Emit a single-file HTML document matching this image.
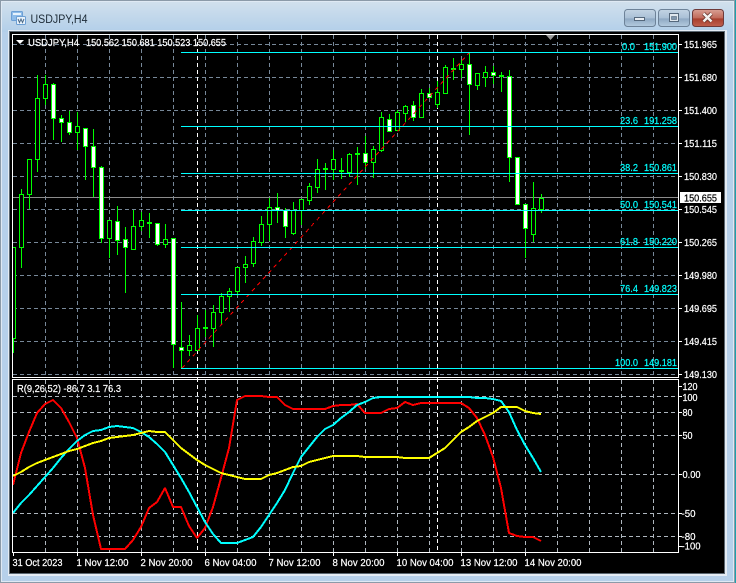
<!DOCTYPE html>
<html><head><meta charset="utf-8"><title>USDJPY,H4</title>
<style>
html,body{margin:0;padding:0;background:#1aa3ad;width:736px;height:583px;overflow:hidden}
svg{display:block}
text{font-family:"Liberation Sans",sans-serif;font-size:10.5px;fill:#fff;stroke:#fff;stroke-width:.22px}
.c text{fill:#00ffff;stroke:#00ffff}
</style></head><body>
<svg width="736" height="583" viewBox="0 0 736 583" xmlns="http://www.w3.org/2000/svg">
<defs>
<linearGradient id="tb" x1="0" y1="0" x2="0" y2="1"><stop offset="0" stop-color="#d3e1ed"/><stop offset="1" stop-color="#b3cfe9"/></linearGradient>
<linearGradient id="btn" x1="0" y1="0" x2="0" y2="1"><stop offset="0" stop-color="#c3d4e4"/><stop offset=".5" stop-color="#a9c0d6"/><stop offset=".55" stop-color="#8fa9c3"/><stop offset="1" stop-color="#b4cbe0"/></linearGradient>
<linearGradient id="cls" x1="0" y1="0" x2="0" y2="1"><stop offset="0" stop-color="#d9a095"/><stop offset=".5" stop-color="#c06a5a"/><stop offset=".55" stop-color="#a83f2e"/><stop offset="1" stop-color="#c0604e"/></linearGradient>
</defs>
<!-- window frame -->
<rect x="0" y="0" width="735" height="582" fill="#b6d0ea"/>
<rect x="0" y="0" width="735" height="32" fill="url(#tb)"/>
<rect x="0.5" y="0.5" width="734" height="582" fill="none" stroke="#8b9aa8"/>
<rect x="1.5" y="1.5" width="732" height="580" fill="none" stroke="#dfe9f3"/>
<rect x="8" y="30" width="719" height="546" fill="#e4ecf4"/>
<rect x="9" y="31" width="716" height="543" fill="#5a6670"/>
<rect x="10" y="32" width="714" height="541" fill="#000"/>
<!-- title -->
<g>
<rect x="11.5" y="11.5" width="11" height="9" rx="1" fill="#8fbdea" stroke="#6c9fd4"/>
<rect x="13" y="13" width="8" height="2" fill="#e8f3fc"/>
<rect x="16.5" y="16.5" width="9" height="8" rx="1" fill="#e9f3fc" stroke="#6c9fd4"/>
<path d="M18 19l1.500 3.500l1.500-3.500l1.500 3.500l1.500-3.500" fill="none" stroke="#4c6a88" stroke-width="1"/>
</g>
<text x="30.500" y="23" textLength="57" lengthAdjust="spacingAndGlyphs" style="font-size:11.5px;fill:#1c2a36;stroke:none">USDJPY,H4</text>
<!-- buttons -->
<rect x="624.500" y="9.500" width="31" height="17" rx="3" fill="url(#btn)" stroke="#6d8298"/>
<rect x="634.500" y="17.500" width="10" height="3" fill="#e9eef3" stroke="#55687c"/>
<rect x="658.500" y="9.500" width="31" height="17" rx="3" fill="url(#btn)" stroke="#6d8298"/>
<rect x="669.500" y="13.500" width="9" height="8" fill="#dfe7ee" stroke="#55687c"/>
<rect x="671.500" y="16.500" width="5" height="3" fill="#7f96ad" stroke="#55687c" stroke-width=".6"/>
<rect x="692.500" y="9.500" width="31" height="17" rx="3" fill="url(#cls)" stroke="#6e3a3a"/>
<path d="M703.500 13.500l8 8M711.500 13.500l-8 8" stroke="#5c2a22" stroke-width="4"/>
<path d="M703.500 13.500l8 8M711.500 13.500l-8 8" stroke="#f4f1ee" stroke-width="2.600"/>
<!-- main grid -->
<g fill="none" stroke="#778899" stroke-dasharray="4 3">
<path d="M13 44.500H678M13 77.500H678M13 110.500H678M13 143.500H678M13 176.500H678M13 209.500H678M13 242.500H678M13 275.500H678M13 308.500H678M13 341.500H678M13 374.500H678"/>
<path d="M45.500 35V377M77.500 35V377M109.500 35V377M141.500 35V377M173.500 35V377M205.500 35V377M237.500 35V377M269.500 35V377M301.500 35V377M333.500 35V377M365.500 35V377M397.500 35V377M429.500 35V377M461.500 35V377M493.500 35V377M525.500 35V377M557.500 35V377M589.500 35V377M621.500 35V377M653.500 35V377"/>
</g>
<!-- sub grid -->
<g fill="none" stroke="#aeb6be" stroke-dasharray="4 3">
<path d="M13 396.500H678M13 412.500H678M13 435.500H678M13 474.500H678M13 513.500H678M13 536.500H678"/>
<path d="M45.500 380V552M77.500 380V552M109.500 380V552M141.500 380V552M173.500 380V552M205.500 380V552M237.500 380V552M269.500 380V552M301.500 380V552M333.500 380V552M365.500 380V552M397.500 380V552M429.500 380V552M461.500 380V552M493.500 380V552M525.500 380V552M557.500 380V552M589.500 380V552M621.500 380V552M653.500 380V552"/>
</g>
<!-- period separators -->
<path d="M197.500 35V552M437.500 35V552" stroke="#fff" stroke-dasharray="4 3" fill="none"/>
<!-- bid line -->
<path d="M13 197.500H678" stroke="#8c8c8c" fill="none"/>
<!-- wicks -->
<path fill="none" stroke="#00ff00" d="M13.500 338V353M21.500 189V268M29.500 159V209M37.500 75V172M45.500 75V105M53.500 83V140M61.500 115V142M69.500 111V135M77.500 112V150M85.500 128V180M93.500 129V197M101.500 166V243M109.500 220V258M117.500 206V255M125.500 227V293M133.500 210V249M141.500 212V231M149.500 213V238M157.500 223V246M165.500 224V248M173.500 238V368M181.500 302V368M189.500 335V356M197.500 315V350M205.500 310V337M213.500 305V347M221.500 293V325M229.500 288V312M237.500 267V296M245.500 256V283M253.500 237V267M261.500 216V246M269.500 198V241M277.500 193V223M285.500 208V238M293.500 202V235M301.500 199V225M309.500 183V205M317.500 159V193M325.500 163V190M333.500 150V180M341.500 158V179M349.500 153V177M357.500 147V185M365.500 136V169M373.500 146V178M381.500 112V152M389.500 114V131M397.500 110V130M405.500 105V122M413.500 101V121M421.500 89V117M429.500 88V97M437.500 81V108M445.500 65V94M453.500 58V80M461.500 60V78M469.500 53V135M477.500 73V90M485.500 66V87M493.500 66V84M501.500 72V92M509.500 70V182M517.500 157V205M525.500 204V258M533.500 182V242M541.500 194V213"/>
<!-- bull bodies -->
<path fill="#000" stroke="#00ff00" d="M13 247.500h2.500v91H13M19.500 194.500h4v53h-4zM27.500 159.500h4v35h-4zM35.500 98.500h4v61h-4zM43.500 84.500h4v14h-4zM75.500 126.500h4v6h-4zM107.500 220.500h4v18h-4zM131.500 226.500h4v23h-4zM139.500 220.500h4v6h-4zM147.500 222.500h4v1h-4zM163.500 239.500h4v5h-4zM187.500 345.500h4v5h-4zM195.500 328.500h4v22h-4zM203.500 327.500h4v1h-4zM211.500 312.500h4v16h-4zM219.500 296.500h4v16h-4zM227.500 291.500h4v5h-4zM235.500 267.500h4v24h-4zM243.500 264.500h4v3h-4zM251.500 241.500h4v22h-4zM259.500 224.500h4v18h-4zM267.500 207.500h4v17h-4zM291.500 210.500h4v23h-4zM299.500 199.500h4v11h-4zM307.500 186.500h4v14h-4zM315.500 169.500h4v18h-4zM323.500 168.500h4v1h-4zM331.500 159.500h4v10h-4zM339.500 170.500h4v1h-4zM347.500 154.500h4v18h-4zM355.500 153.500h4v1h-4zM371.500 149.500h4v13h-4zM379.500 117.500h4v33h-4zM395.500 112.500h4v18h-4zM403.500 106.500h4v7h-4zM419.500 93.500h4v24h-4zM435.500 92.500h4v12h-4zM443.500 67.500h4v26h-4zM451.500 68.500h4v1h-4zM459.500 64.500h4v5h-4zM475.500 73.500h4v12h-4zM483.500 72.500h4v5h-4zM499.500 75.500h4v1h-4zM531.500 208.500h4v26h-4zM539.500 198.500h4v11h-4z"/>
<!-- bear bodies -->
<path fill="#fff" stroke="#00ff00" d="M51.500 84.500h4v34h-4zM59.500 118.500h4v4h-4zM67.500 122.500h4v10h-4zM83.500 128.500h4v18h-4zM91.500 146.500h4v21h-4zM99.500 167.500h4v71h-4zM115.500 221.500h4v19h-4zM123.500 239.500h4v8h-4zM155.500 223.500h4v21h-4zM171.500 238.500h4v106h-4zM179.500 347.500h4v3h-4zM275.500 207.500h4v3h-4zM283.500 210.500h4v16h-4zM363.500 153.500h4v9h-4zM387.500 119.500h4v12h-4zM411.500 105.500h4v12h-4zM427.500 93.500h4v4h-4zM467.500 64.500h4v20h-4zM491.500 72.500h4v3h-4zM507.500 76.500h4v81h-4zM515.500 157.500h4v47h-4zM523.500 204.500h4v24h-4z"/>
<!-- fib trend -->
<path d="M182 368L469 53" stroke="#ff0000" stroke-dasharray="4 4" fill="none" shape-rendering="crispEdges"/>
<!-- fib levels -->
<path d="M181 52.500H678M181 126.500H678M181 173.500H678M181 210.500H678M181 247.500H678M181 294.500H678M181 368.500H678" stroke="#00ffff" fill="none"/>
<g class="c">
<text x="622" y="50" textLength="13" lengthAdjust="spacingAndGlyphs">0.0</text><text x="644" y="50" textLength="33" lengthAdjust="spacingAndGlyphs">151.900</text>
<text x="620" y="124" textLength="18" lengthAdjust="spacingAndGlyphs">23.6</text><text x="644" y="124" textLength="33" lengthAdjust="spacingAndGlyphs">191.258</text>
<text x="620" y="171" textLength="18" lengthAdjust="spacingAndGlyphs">38.2</text><text x="644" y="171" textLength="33" lengthAdjust="spacingAndGlyphs">150.861</text>
<text x="620" y="208" textLength="18" lengthAdjust="spacingAndGlyphs">50.0</text><text x="644" y="208" textLength="33" lengthAdjust="spacingAndGlyphs">150.541</text>
<text x="620" y="245" textLength="18" lengthAdjust="spacingAndGlyphs">61.8</text><text x="644" y="245" textLength="33" lengthAdjust="spacingAndGlyphs">150.220</text>
<text x="620" y="292" textLength="18" lengthAdjust="spacingAndGlyphs">76.4</text><text x="644" y="292" textLength="33" lengthAdjust="spacingAndGlyphs">149.823</text>
<text x="615" y="366" textLength="23" lengthAdjust="spacingAndGlyphs">100.0</text><text x="644" y="366" textLength="33" lengthAdjust="spacingAndGlyphs">149.181</text>
</g>
<!-- indicator lines -->
<g fill="none" stroke-width="2" stroke-linejoin="bevel" shape-rendering="crispEdges">
<polyline stroke="#ff0000" points="13,485 21,453 29,432 37,413 45,404 53,400 61,408 69,422 77,438 85,468 93,515 101,549 109,549 117,549 125,549 133,540 141,527 149,508 157,502 165,488 173,507 181,507 189,526 197,538 205,528 213,507 221,478 229,448 237,400 245,396 253,396 261,396 269,397 277,397 285,405 293,409 301,409 309,409 317,409 325,409 333,406 341,405 349,405 357,404 365,413 373,413 381,413 389,409 397,408 405,402 413,405 421,403 429,403 437,403 445,403 453,403 461,403 469,408 477,418 485,435 493,457 501,488 509,533 517,536 525,537 533,537 541,541"/>
<polyline stroke="#00ffff" points="13,513 21,503 29,495 37,486 45,477 53,468 61,458 69,449 77,441 85,435 93,431 101,430 109,427 117,426 125,427 133,428 141,432 149,437 157,444 165,452 173,465 181,478 189,492 197,507 205,522 213,534 221,543 229,543 237,543 245,540 253,537 261,527 269,515 277,503 285,490 293,473 301,457 309,447 317,437 325,429 333,425 341,418 349,412 357,405 365,402 373,398 381,397 389,397 397,397 405,397 413,397 421,397 429,397 437,397 445,397 453,397 461,397 469,397 477,398 485,398 493,399 501,401 509,412 517,430 525,445 533,458 541,472"/>
<polyline stroke="#ffff00" points="13,476 21,472 29,467 37,463 45,460 53,457 61,454 69,451 77,449 85,446 93,443 101,441 109,438 117,437 125,436 133,435 141,433 149,431 157,432 165,432 173,440 181,448 189,454 197,460 205,465 213,469 221,473 229,475 237,477 245,479 253,479 261,479 269,475 277,473 285,470 293,467 301,466 309,462 317,460 325,458 333,456 341,456 349,456 357,456 365,457 373,457 381,457 389,457 397,457 405,458 413,458 421,458 429,458 437,453 445,448 453,440 461,432 469,427 477,421 485,417 493,413 501,407 509,407 517,407 525,411 533,413 541,414"/>
</g>
<!-- chart borders -->
<rect x="12.500" y="34.500" width="666" height="343" fill="none" stroke="#fff"/>
<rect x="12.500" y="379.500" width="666" height="173" fill="none" stroke="#fff"/>
<!-- shift marker -->
<polygon points="546,35 555,35 550.500,40" fill="#9a9a9a"/>
<!-- ticks -->
<path fill="none" stroke="#fff" d="M679 44.500h3M679 77.500h3M679 110.500h3M679 143.500h3M679 176.500h3M679 209.500h3M679 242.500h3M679 275.500h3M679 308.500h3M679 341.500h3M679 374.500h3M679 386.500h3M679 396.500h3M679 412.500h3M679 435.500h3M679 474.500h3M679 513.500h3M679 536.500h3M679 546.500h3M13.500 553v3M77.500 553v3M141.500 553v3M205.500 553v3M269.500 553v3M333.500 553v3M397.500 553v3M461.500 553v3M525.500 553v3"/>
<!-- header -->
<polygon points="16,40 24,40 20,44" fill="#fff"/>
<text x="28" y="46" textLength="51" lengthAdjust="spacingAndGlyphs">USDJPY,H4</text>
<text x="86" y="46" textLength="140" lengthAdjust="spacingAndGlyphs">150.562 150.681 150.523 150.655</text>
<text x="17" y="392" textLength="104" lengthAdjust="spacingAndGlyphs">R(9,26,52) -86.7 3.1 76.3</text>
<!-- price axis -->
<g>
<text x="684" y="48" textLength="33" lengthAdjust="spacingAndGlyphs">151.965</text>
<text x="684" y="81" textLength="33" lengthAdjust="spacingAndGlyphs">151.680</text>
<text x="684" y="114" textLength="33" lengthAdjust="spacingAndGlyphs">151.400</text>
<text x="684" y="147" textLength="33" lengthAdjust="spacingAndGlyphs">151.115</text>
<text x="684" y="180" textLength="33" lengthAdjust="spacingAndGlyphs">150.830</text>
<text x="684" y="213" textLength="33" lengthAdjust="spacingAndGlyphs">150.545</text>
<text x="684" y="246" textLength="33" lengthAdjust="spacingAndGlyphs">150.265</text>
<text x="684" y="279" textLength="33" lengthAdjust="spacingAndGlyphs">149.980</text>
<text x="684" y="312" textLength="33" lengthAdjust="spacingAndGlyphs">149.695</text>
<text x="684" y="345" textLength="33" lengthAdjust="spacingAndGlyphs">149.415</text>
<text x="684" y="378" textLength="33" lengthAdjust="spacingAndGlyphs">149.130</text>
</g>
<rect x="680" y="192" width="41" height="11" fill="#fff"/>
<text x="684" y="201.500" textLength="33" lengthAdjust="spacingAndGlyphs" style="fill:#000;stroke:#000">150.655</text>
<!-- indicator axis -->
<text x="682.500" y="390" textLength="15" lengthAdjust="spacingAndGlyphs">120</text>
<text x="682.500" y="401" textLength="15" lengthAdjust="spacingAndGlyphs">100</text>
<text x="682.500" y="416" textLength="10" lengthAdjust="spacingAndGlyphs">80</text>
<text x="682.500" y="439" textLength="10" lengthAdjust="spacingAndGlyphs">50</text>
<text x="682.500" y="478" textLength="18" lengthAdjust="spacingAndGlyphs">0.00</text>
<text x="681.500" y="517" textLength="14" lengthAdjust="spacingAndGlyphs">-50</text>
<text x="681.500" y="540" textLength="14" lengthAdjust="spacingAndGlyphs">-80</text>
<text x="681.500" y="549.500" textLength="19" lengthAdjust="spacingAndGlyphs">-100</text>
<!-- time axis -->
<text x="12.500" y="566" textLength="50" lengthAdjust="spacingAndGlyphs">31 Oct 2023</text>
<text x="76.500" y="566" textLength="52" lengthAdjust="spacingAndGlyphs">1 Nov 12:00</text>
<text x="140.500" y="566" textLength="52" lengthAdjust="spacingAndGlyphs">2 Nov 20:00</text>
<text x="204.500" y="566" textLength="52" lengthAdjust="spacingAndGlyphs">6 Nov 04:00</text>
<text x="268.500" y="566" textLength="52" lengthAdjust="spacingAndGlyphs">7 Nov 12:00</text>
<text x="332.500" y="566" textLength="52" lengthAdjust="spacingAndGlyphs">8 Nov 20:00</text>
<text x="396.500" y="566" textLength="57" lengthAdjust="spacingAndGlyphs">10 Nov 04:00</text>
<text x="460.500" y="566" textLength="57" lengthAdjust="spacingAndGlyphs">13 Nov 12:00</text>
<text x="524.500" y="566" textLength="57" lengthAdjust="spacingAndGlyphs">14 Nov 20:00</text>
</svg>
</body></html>
